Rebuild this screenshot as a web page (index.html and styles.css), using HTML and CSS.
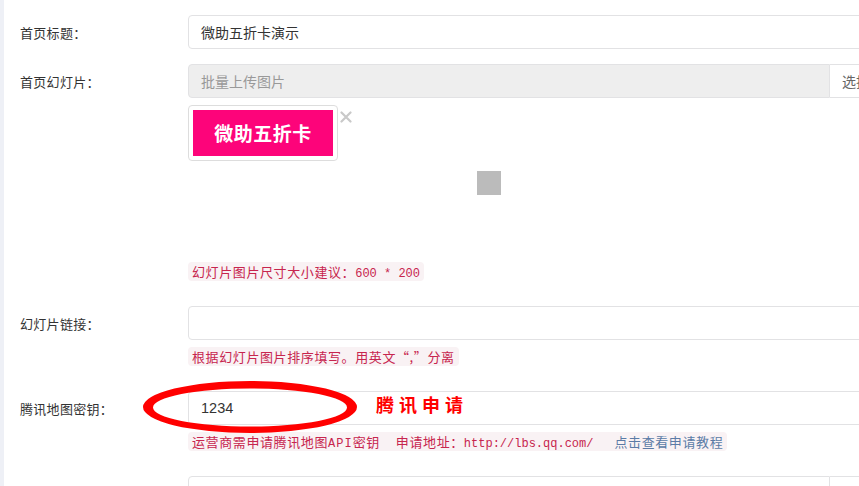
FILE: index.html
```html
<!DOCTYPE html>
<html lang="zh-CN">
<head>
<meta charset="utf-8">
<title>设置</title>
<link rel="stylesheet" href="styles.css">
</head>
<body>
<div class="page">
  <form class="form">
    <div class="group">
      <label class="label">首页标题：</label>
      <div class="ctrl">
        <div class="input">微助五折卡演示</div>
      </div>
    </div>

    <div class="group">
      <label class="label">首页幻灯片：</label>
      <div class="ctrl">
        <div class="input-group">
          <div class="input disabled">批量上传图片</div>
          <div class="btn">选择图片</div>
        </div>
        <div class="thumbs">
          <div class="thumb">
            <div class="banner">微助五折卡</div>
          </div>
          <svg class="close" width="12" height="12" viewBox="0 0 12 12"><path d="M1.5 1.5 L10.5 10.5 M10.5 1.5 L1.5 10.5" stroke="#c9c9c9" stroke-width="2.2" stroke-linecap="round"/></svg>
        </div>
        <div class="loader"></div>
        <div class="help"><code class="code">幻灯片图片尺寸大小建议：<span class="m">600 * 200</span></code></div>
      </div>
    </div>

    <div class="group">
      <label class="label">幻灯片链接：</label>
      <div class="ctrl">
        <div class="input"></div>
        <div class="help"><code class="code">根据幻灯片图片排序填写。用英文“,”分离</code></div>
      </div>
    </div>

    <div class="group">
      <label class="label">腾讯地图密钥：</label>
      <div class="ctrl mark">
        <div class="input num">1234</div>
        <div class="help"><code class="code">运营商需申请腾讯地图<span class="m api">API</span>密钥<span class="gap1"></span>申请地址：<span class="m">http://lbs.qq.com/</span><span class="gap2"></span><a class="link">点击查看申请教程</a></code></div>
        <svg class="ellipse" width="216" height="54" viewBox="0 0 216 54"><path fill="#ff0000" fill-rule="evenodd" d="M1 27 A107 26 0 1 0 215 27 A107 26 0 1 0 1 27 Z M11 27.5 A97 19 0 1 0 205 27.5 A97 19 0 1 0 11 27.5 Z"/></svg>
        <span class="note">腾讯申请</span>
      </div>
    </div>

    <div class="group">
      <label class="label">&nbsp;</label>
      <div class="ctrl">
        <div class="input-group">
          <div class="input"></div>
          <div class="btn">选择图片</div>
        </div>
      </div>
    </div>
  </form>
</div>
</body>
</html>
```

FILE: styles.css
```css
html, body {
  margin: 0;
  padding: 0;
  background: #ffffff;
  overflow: hidden;
}

body {
  width: 859px;
  height: 486px;
  font-family: "Noto Sans CJK SC", "Liberation Sans", sans-serif;
  color: #333333;
}

.page {
  border-left: 4px solid #eef0f6;
  height: 486px;
  box-sizing: border-box;
  width: 1100px;
}

.form {
  padding-top: 15px;
  padding-left: 16px;
}

.group {
  display: flex;
  margin-bottom: 15px;
}

.label {
  width: 168px;
  flex: none;
  font-size: 13px;
  line-height: 20px;
  padding-top: 8px;
  color: #333333;
  letter-spacing: 0.3px;
}

.ctrl {
  width: 800px;
  flex: none;
}

.mark {
  position: relative;
}

.input {
  height: 34px;
  box-sizing: border-box;
  border: 1px solid #e2e2e4;
  border-radius: 4px;
  padding: 0 12px;
  font-size: 14px;
  line-height: 32px;
  color: #333333;
  background: #ffffff;
}

.num {
  font-family: "Liberation Sans", "Noto Sans CJK SC", sans-serif;
  font-size: 14.5px;
}

.input-group {
  display: flex;
}

.input-group .input {
  width: 642px;
  flex: none;
  border-radius: 4px 0 0 4px;
}

.input.disabled {
  background: #eeeeee;
  color: #999999;
}

.btn {
  height: 34px;
  box-sizing: border-box;
  border: 1px solid #e2e2e4;
  border-left: none;
  padding: 0 12px;
  font-size: 14px;
  line-height: 32px;
  color: #666666;
  background: #ffffff;
  width: 150px;
}

.thumbs {
  display: flex;
  align-items: flex-start;
  margin-top: 7px;
}

.thumb {
  width: 150px;
  height: 56px;
  box-sizing: border-box;
  border: 1px solid #dddddd;
  border-radius: 4px;
  padding: 4px;
}

.banner {
  height: 46px;
  background: #fd047a;
  color: #ffffff;
  font-weight: 700;
  font-size: 19px;
  line-height: 46px;
  text-align: center;
  letter-spacing: 0.5px;
}

.close {
  margin-left: 2px;
  margin-top: 6px;
}

.loader {
  width: 24px;
  height: 24px;
  background: #bbbbbb;
  margin-top: 10px;
  margin-left: 289px;
}

.help {
  margin-top: 7px;
  margin-bottom: 10px;
  line-height: 19px;
  height: 19px;
}

.loader + .help {
  margin-top: 67px;
}

.code {
  display: inline-block;
  vertical-align: top;
  height: 19px;
  box-sizing: border-box;
  padding: 2px 4px;
  border-radius: 4px;
  background: #f9f2f4;
  color: #c7254e;
  font-family: "Noto Sans CJK SC", monospace;
  font-size: 13px;
  line-height: 15px;
  letter-spacing: 0.6px;
  white-space: nowrap;
}

.m {
  font-family: "Liberation Mono", monospace;
  font-size: 12px;
  letter-spacing: 0;
}

.api {
  letter-spacing: 1px;
}

.gap1 {
  display: inline-block;
  width: 16px;
}

.gap2 {
  display: inline-block;
  width: 21px;
}

.link {
  color: #5b7ba6;
  text-decoration: none;
}

.ellipse {
  position: absolute;
  left: -46px;
  top: -11px;
}

.note {
  position: absolute;
  left: 188px;
  top: 1px;
  font-size: 18px;
  line-height: 24px;
  font-weight: 700;
  color: #ff0000;
  letter-spacing: 5px;
  white-space: nowrap;
}
```
